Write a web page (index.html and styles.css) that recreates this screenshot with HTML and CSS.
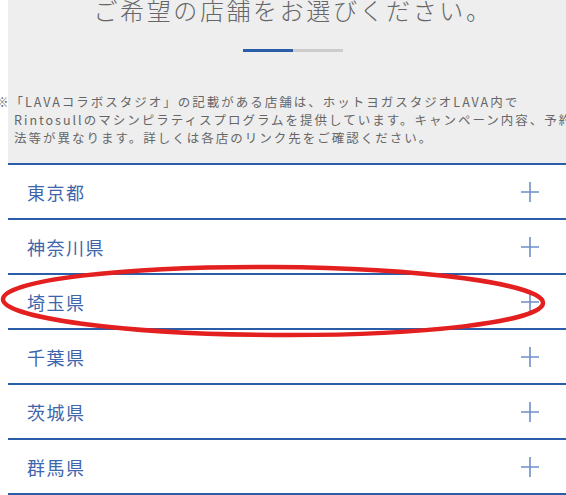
FILE: index.html
```html
<!DOCTYPE html>
<html>
<head>
  <meta charset="utf-8">
  <link rel="stylesheet" href="styles.css">
</head>
<body>
  <div class="page">
    <section class="intro">
      <h1 class="title">ご希望の店舗をお選びください。</h1>
      <div class="bar"><span class="bar-fill"></span></div>
      <p class="note">※「LAVAコラボスタジオ」の記載がある店舗は、ホットヨガスタジオLAVA内で<br>Rintosullのマシンピラティスプログラムを提供しています。キャンペーン内容、予約方法等が異なります。詳しくは各店のリンク先をご確認ください。</p>
    </section>

    <ul class="pref-list">
      <li class="pref"><span class="pref-name">東京都</span><svg class="plus" viewBox="0 0 18 20"><path d="M0 10H18M9 0V20"/></svg></li>
      <li class="pref"><span class="pref-name">神奈川県</span><svg class="plus" viewBox="0 0 18 20"><path d="M0 10H18M9 0V20"/></svg></li>
      <li class="pref"><span class="pref-name">埼玉県</span><svg class="plus" viewBox="0 0 18 20"><path d="M0 10H18M9 0V20"/></svg></li>
      <li class="pref"><span class="pref-name">千葉県</span><svg class="plus" viewBox="0 0 18 20"><path d="M0 10H18M9 0V20"/></svg></li>
      <li class="pref"><span class="pref-name">茨城県</span><svg class="plus" viewBox="0 0 18 20"><path d="M0 10H18M9 0V20"/></svg></li>
      <li class="pref"><span class="pref-name">群馬県</span><svg class="plus" viewBox="0 0 18 20"><path d="M0 10H18M9 0V20"/></svg></li>
    </ul>
  </div>

  <svg class="mark" viewBox="0 0 566 495">
    <ellipse cx="273" cy="301" rx="270" ry="34" transform="rotate(0.4 273 301)"/>
  </svg>
</body>
</html>
```

FILE: styles.css
```css
html, body {
  margin: 0;
  overflow: hidden;
}
body {
  padding-left: 8px;
  font-family: "Noto Sans CJK JP", "Noto Sans", sans-serif;
  color: #555;
  background: #fff;
}
.page {
  width: 570px;
}
.intro {
  background-color: #eeeeee;
  padding: 0 0 16px 6px;
}
.title {
  margin: -2px 0 0 -6px;
  font-size: 24px;
  line-height: 24px;
  font-weight: 300;
  letter-spacing: 2.6px;
  text-align: center;
  color: #666;
}
.bar {
  width: 100px;
  height: 3px;
  margin: 27px auto 0;
  background-color: #cccccc;
  position: relative;
  left: -3px;
}
.bar-fill {
  display: block;
  width: 50px;
  height: 3px;
  background-color: #2b5ca8;
}
.note {
  margin: 41px -14px 0 0;
  font-size: 12.5px;
  line-height: 18px;
  letter-spacing: 2px;
  text-indent: -18px;
  color: #666;
}
.pref-list {
  list-style: none;
  margin: 0;
  padding: 0;
  border-top: 2px solid #2b5ca8;
}
.pref {
  display: flex;
  align-items: center;
  justify-content: space-between;
  height: 53px;
  padding: 0 39px 0 19px;
  border-bottom: 2px solid #2b5ca8;
}
.pref-name {
  font-size: 18px;
  letter-spacing: 1.5px;
  color: #3d66ad;
}
.plus {
  width: 18px;
  height: 20px;
}
.plus path {
  fill: none;
  stroke: #6f8fc8;
  stroke-width: 1.6;
}
.mark {
  position: absolute;
  left: 0;
  top: 0;
  width: 566px;
  height: 495px;
  pointer-events: none;
}
.mark ellipse {
  fill: none;
  stroke: #e41f1f;
  stroke-width: 4.5;
}
```
